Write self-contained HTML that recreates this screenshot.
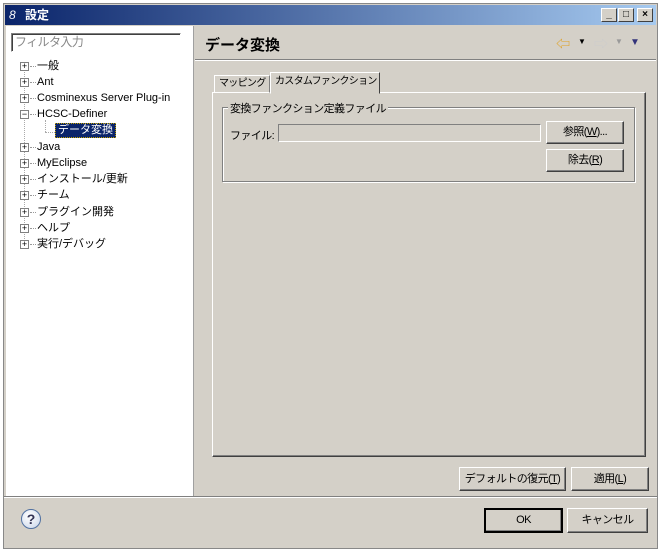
<!DOCTYPE html>
<html><head><meta charset="utf-8"><style>
*{margin:0;padding:0;box-sizing:border-box;white-space:nowrap}
body{width:660px;height:551px;background:#fff;position:relative;overflow:hidden;font-family:"Liberation Sans","Noto Sans CJK JP",sans-serif;font-size:11px;color:#000}
.a{position:absolute}
.j{letter-spacing:-0.6px}
.win{left:3px;top:3px;width:655px;height:546px;background:#d4d0c8;border:1px solid #888}
.title{left:5px;top:5px;width:651px;height:20px;background:linear-gradient(90deg,#0a246a,#a6caf0);color:#fff;font-weight:bold;font-size:12px;line-height:20px;padding-left:20px}
.tb{width:16px;height:14px;top:8px;background:#d4d0c8;border:1px solid;border-color:#fff #404040 #404040 #fff;font-size:10px;line-height:11px;text-align:center;font-weight:bold;color:#000}
.tree{left:6px;top:26px;width:188px;height:470px;background:#fff;border-right:1px solid #a0a0a0}
.filter{left:11px;top:33px;width:170px;height:19px;border:1px solid;border-color:#808080 #fff #fff #808080;box-shadow:inset 1px 1px 0 #404040;color:#888;padding-left:3px;line-height:17px;font-size:12px;letter-spacing:-0.6px}
.it{left:37px;font-size:11px;line-height:14px}
.pb{left:20px;width:9px;height:9px;border:1px solid #808080;background:#fff;font-size:9px;line-height:7px;text-align:center}
.pb::after{content:"";position:absolute;left:9px;top:3px;width:6px;border-top:1px dotted #999}
.btn{background:#d4d0c8;border:1px solid;border-color:#fff #404040 #404040 #fff;box-shadow:inset -1px -1px 0 #808080;text-align:center;font-size:11px;letter-spacing:-0.6px}
.sunk{border:1px solid;border-color:#808080 #fff #fff #808080}
.tab{font-size:10px;letter-spacing:-0.7px}
</style></head><body>
<div class="a win"></div>
<div class="a title"><span style="position:absolute;left:4px;font-style:italic;font-weight:normal">8</span>設定</div>
<div class="a tb" style="left:601px">_</div>
<div class="a tb" style="left:618px">□</div>
<div class="a tb" style="left:637px">×</div>
<div class="a tree"></div>
<div class="a filter">フィルタ入力</div>
<div class="a" style="left:24px;top:72px;height:175px;border-left:1px dotted #aaa"></div>
<div class="a" style="left:45px;top:120px;height:12px;border-left:1px dotted #aaa"></div>
<div class="a" style="left:45px;top:132px;width:10px;border-top:1px dotted #aaa"></div>
<div class="a pb" style="top:62px">+</div><div class="a it" style="top:59px">一般</div>
<div class="a pb" style="top:78px">+</div><div class="a it" style="top:75px">Ant</div>
<div class="a pb" style="top:94px">+</div><div class="a it" style="top:91px">Cosminexus Server Plug-in</div>
<div class="a pb" style="top:110px">−</div><div class="a it" style="top:107px">HCSC-Definer</div>
<div class="a" style="left:55px;top:123px;height:15px;background:#0a246a;color:#fff;padding:0 2px;line-height:13px;border:1px dotted #c0a000">データ変換</div>
<div class="a pb" style="top:143px">+</div><div class="a it" style="top:140px">Java</div>
<div class="a pb" style="top:159px">+</div><div class="a it" style="top:156px">MyEclipse</div>
<div class="a pb" style="top:175px">+</div><div class="a it" style="top:172px">インストール/更新</div>
<div class="a pb" style="top:191px">+</div><div class="a it" style="top:188px">チーム</div>
<div class="a pb" style="top:208px">+</div><div class="a it" style="top:205px">プラグイン開発</div>
<div class="a pb" style="top:224px">+</div><div class="a it" style="top:221px">ヘルプ</div>
<div class="a pb" style="top:240px">+</div><div class="a it" style="top:237px">実行/デバッグ</div>
<div class="a" style="left:205px;top:34px;font-size:15px;font-weight:bold">データ変換</div>
<div class="a" style="left:556px;top:34px;color:#e0a020;font-size:14px">⇦</div>
<div class="a" style="left:578px;top:37px;font-size:8px">▼</div>
<div class="a" style="left:594px;top:34px;color:#ccc;font-size:14px">⇨</div>
<div class="a" style="left:615px;top:37px;font-size:8px;color:#999">▼</div>
<div class="a" style="left:630px;top:37px;font-size:10px;color:#33337a">▼</div>
<div class="a" style="left:195px;top:59px;width:461px;border-top:1px solid #808080;border-bottom:1px solid #fff"></div>
<div class="a" style="left:212px;top:92px;width:434px;height:365px;border:1px solid;border-color:#fff #404040 #404040 #fff;box-shadow:inset -1px -1px 0 #808080"></div>
<div class="a tab" style="left:214px;top:75px;width:56px;height:18px;border:1px solid;border-color:#fff #808080 transparent #fff;line-height:16px;padding-left:4px;overflow:hidden">マッピング</div>
<div class="a tab" style="left:270px;top:72px;width:110px;height:22px;border:1px solid;border-color:#fff #404040 transparent #fff;background:#d4d0c8;line-height:18px;padding-left:4px;overflow:hidden">カスタムファンクション</div>
<div class="a" style="left:222px;top:107px;width:413px;height:75px;border:1px solid #808080;box-shadow:1px 1px 0 #fff,inset 1px 1px 0 #fff"></div>
<div class="a j" style="left:228px;top:100px;background:#d4d0c8;padding:0 2px">変換ファンクション定義ファイル</div>
<div class="a j" style="left:230px;top:127px">ファイル:</div>
<div class="a sunk" style="left:278px;top:124px;width:263px;height:18px"></div>
<div class="a btn" style="left:546px;top:121px;width:78px;height:23px;line-height:21px">参照(<u>W</u>)...</div>
<div class="a btn" style="left:546px;top:149px;width:78px;height:23px;line-height:21px">除去(<u>R</u>)</div>
<div class="a btn" style="left:459px;top:467px;width:107px;height:24px;line-height:22px">デフォルトの復元(<u>T</u>)</div>
<div class="a btn" style="left:571px;top:467px;width:78px;height:24px;line-height:22px">適用(<u>L</u>)</div>
<div class="a" style="left:4px;top:496px;width:653px;border-top:1px solid #808080;border-bottom:1px solid #fff"></div>
<div class="a" style="left:21px;top:509px;width:20px;height:20px;border-radius:50%;border:1px solid #5070a0;background:radial-gradient(circle at 40% 35%,#fff,#c8d4e8);text-align:center;font-weight:bold;font-size:14px;line-height:18px;color:#335">?</div>
<div class="a btn" style="left:484px;top:508px;width:79px;height:25px;line-height:21px;border:2px solid #000">OK</div>
<div class="a btn" style="left:567px;top:508px;width:81px;height:25px;line-height:23px">キャンセル</div>
</body></html>
